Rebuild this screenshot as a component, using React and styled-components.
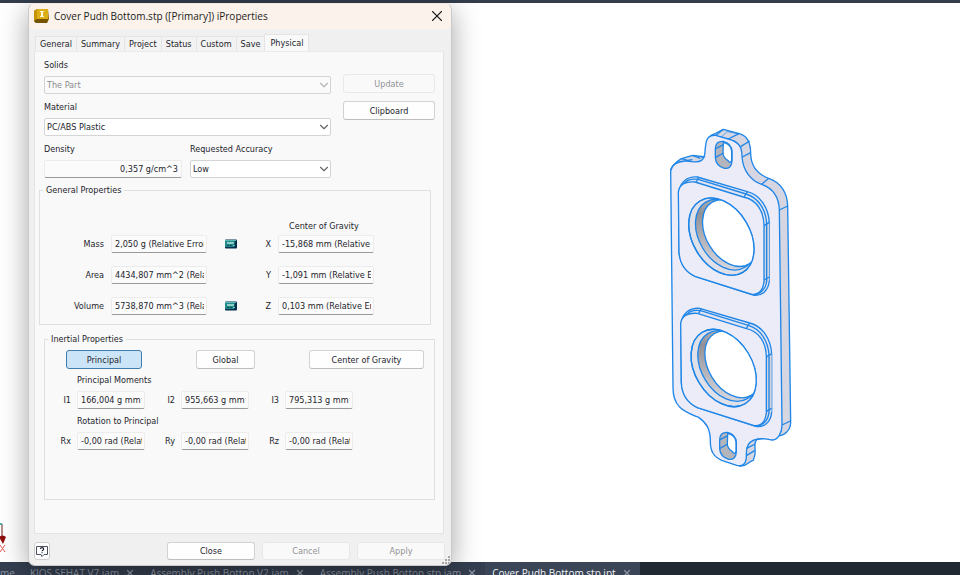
import React from 'react'
import styled, { createGlobalStyle, css } from 'styled-components'
import { ChevronDown, X } from 'lucide-react'

const GlobalStyle = createGlobalStyle`
  * {
    box-sizing: border-box;
  }

  body {
    margin: 0;
    background: #fff;
    overflow: hidden;
  }

  body, button, input, select {
    font-family: 'DejaVu Sans Condensed', 'DejaVu Sans', sans-serif;
    font-size: 9px;
    line-height: 14px;
    color: #24242c;
  }
`

const Desktop = styled.div`
  position: relative;
  display: flex;
  flex-direction: column;
  height: 100vh;
`

const Ribbon = styled.div`
  flex: none;
  height: 3px;
  background: #343d4c;
`

const Viewport = styled.main`
  flex: 1;
  min-height: 0;
  display: flex;
  align-items: center;
  justify-content: flex-end;
  padding-right: 160px;
`

const Triad = styled.svg`
  position: absolute;
  left: 0;
  bottom: 22px;
`

const DocumentTabs = styled.nav`
  flex: none;
  display: flex;
  height: 13px;
  overflow: hidden;
  background: #202832;
  font-family: 'Open Sans', 'Noto Sans', sans-serif;
`

const DocumentTab = styled.div`
  display: flex;
  align-items: center;
  gap: 6px;
  height: 22px;
  padding: 0 8px 0 ${props => (props.$first ? 0 : 7)}px;
  background: ${props => (props.$active ? '#3a4557' : '#343e4f')};

  a {
    font-size: 10px;
    white-space: nowrap;
    text-decoration: none;
    color: ${props => (props.$active ? '#f1f3f6' : '#8d949f')};
  }

  button {
    display: flex;
    padding: 0;
    border: 0;
    background: none;
    color: #8d949f;
  }
`

const Dialog = styled.section`
  position: absolute;
  top: 3px;
  left: 28px;
  width: min(424px, 100vw - 56px);
  border: 1px solid #c9c9c9;
  border-top-color: #f1e8e0;
  border-radius: 7px;
  background: #f0f0f0;
  box-shadow: 0 6px 28px rgba(0, 0, 0, 0.36);
  overflow: hidden;
`

const TitleBar = styled.header`
  display: flex;
  align-items: center;
  gap: 5px;
  height: 25px;
  padding: 0 5px 2px 5px;
  background: #faf2eb;
`

const Title = styled.h1`
  flex: 1;
  margin: 0;
  font: 400 10px/16px 'Open Sans', 'Noto Sans', sans-serif;
  color: #1c1c20;
`

const CloseIcon = styled.button`
  display: flex;
  padding: 0;
  border: 0;
  background: none;
  color: #222;
`

const TabList = styled.div`
  display: flex;
  align-items: flex-end;
  height: 22px;
  padding: 0 6px;
`

const Tab = styled.button`
  height: 15px;
  padding: 1px 4px 0;
  border: 1px solid #e4e4e4;
  border-width: 1px 0 0 1px;
  background: #f3f3f3;
  line-height: 13px;

  ${props =>
    props.$active &&
    css`
      height: 17px;
      padding: 0 5px;
      border-right-width: 1px;
      background: #f9f9f9;
    `}
`

const Panel = styled.div`
  margin: 0 7px 0 5px;
  padding: 6px 8px 33px 9px;
  border: 1px solid #e4e4e4;
  border-top-color: #ebebeb;
  background: #f9f9f9;
`

const MaterialSection = styled.div`
  display: grid;
  grid-template-columns: 287px 1fr;
  gap: 12px;
`

const Stack = styled.div`
  display: flex;
  flex-direction: column;
  gap: 6px;
`

const Actions = styled.div`
  display: flex;
  flex-direction: column;
  gap: 8px;
  padding-top: 16px;
`

const FieldPair = styled.div`
  display: grid;
  grid-template-columns: 1fr 141px;
  gap: 8px;
`

const FieldBlock = styled.div`
  display: flex;
  flex-direction: column;
  gap: 4px;
`

const TextBox = styled.input`
  display: block;
  width: 100%;
  min-width: 0;
  height: 18px;
  padding: 0 ${props => (props.$tight ? 2 : 3)}px 0 3px;
  border: 1px solid #ececec;
  border-bottom-color: #9a9a9a;
  border-radius: 2px;
  background: #fbfbfb;
  outline: 0;
  text-align: ${props => props.$align || 'left'};
`

const SelectBox = styled.div`
  position: relative;

  select {
    display: block;
    width: 100%;
    height: 18px;
    padding: 0 18px 0 2px;
    border: 1px solid #d4d4d4;
    border-radius: 2px;
    background: #fff;
    appearance: none;
    outline: 0;
  }

  select:disabled {
    background: #fafafa;
    color: #8b8b8f;
    opacity: 1;
  }

  svg {
    position: absolute;
    top: 2px;
    right: 0;
    color: ${props => (props.$disabled ? '#b5b5b5' : '#66666a')};
    pointer-events: none;
  }
`

const Button = styled.button`
  height: ${props => (props.$footer ? 18 : 19)}px;
  width: ${props => (props.$width ? `${props.$width}px` : 'auto')};
  padding: 0;
  border: 1px solid #d2d2d2;
  border-bottom-color: #bdbdbd;
  border-radius: 3px;
  background: #fefefe;

  &:disabled {
    border-color: #e8e8e8;
    background: #f9f9f9;
    color: #929297;
  }

  ${props =>
    props.$active &&
    css`
      border-color: #3f7cab;
      background: #cce4f7;
    `}
`

const Group = styled.fieldset`
  min-width: 0;
  margin: ${props => (props.$inset ? '7px 0 0' : '5px 4px 0 -5px')};
  padding: 0;
  border: 1px solid #dfdfdf;

  legend {
    margin-left: 3px;
    padding: 0 3px;
  }
`

const GeneralGrid = styled.div`
  display: grid;
  grid-template-columns: 64px 96px 34px 16px 96px;
  gap: 13px 7px;
  align-items: center;
  padding-bottom: 9px;
`

const GravityHeading = styled.div`
  padding: 22px 0 2px 249px;
`

const FieldLabel = styled.label`
  text-align: right;
  white-space: nowrap;
`

const CalculatorCell = styled.span`
  display: flex;
  justify-content: center;
`

const ModeRow = styled.div`
  display: flex;
  gap: 54px;
  padding: 4px 0 4px 21px;
`

const SubHeading = styled.div`
  padding: 0 0 4px 32px;
`

const InertialGrid = styled.div`
  display: grid;
  grid-template-columns: 26px 68px 24px 68px 24px 68px;
  gap: 6px;
  align-items: center;
  padding-bottom: ${props => (props.$last ? 49 : 5)}px;
`

const Footer = styled.footer`
  display: flex;
  gap: 7px;
  padding: 8px 6px 5px 5px;
`

const HelpButton = styled.button`
  display: flex;
  align-items: center;
  justify-content: center;
  width: 16px;
  height: 18px;
  margin-right: auto;
  padding: 0;
  border: 1px solid #cfcfcf;
  border-radius: 3px;
  background: #fdfdfd;
`

const Grip = styled.svg`
  position: absolute;
  right: 1px;
  bottom: 1px;
`

const generalRows = [
  { name: 'Mass', value: '2,050 g (Relative Error = 0,0%)', axis: 'X', center: '-15,868 mm (Relative Error)', calc: true },
  { name: 'Area', value: '4434,807 mm^2 (Relative Error)', axis: 'Y', center: '-1,091 mm (Relative Error)' },
  { name: 'Volume', value: '5738,870 mm^3 (Relative Error)', axis: 'Z', center: '0,103 mm (Relative Error)', calc: true }
]

const moments = [
  ['I1', '166,004 g mm^2'],
  ['I2', '955,663 g mm^2'],
  ['I3', '795,313 g mm^2']
]

const rotations = [
  ['Rx', '-0,00 rad (Relative)'],
  ['Ry', '-0,00 rad (Relative)'],
  ['Rz', '-0,00 rad (Relative)']
]

const documents = [
  { name: 'KIOS SEHAT V7.iam' },
  { name: 'Assembly Push Botton V2.iam' },
  { name: 'Assembly Push Botton.stp.iam' },
  { name: 'Cover Pudh Bottom.stp.ipt', active: true }
]

const Dropdown = ({ id, label, value, disabled }) => (
  <FieldBlock>
    <label htmlFor={id}>{label}</label>
    <SelectBox $disabled={disabled}>
      <select id={id} disabled={disabled}>
        <option>{value}</option>
      </select>
      <ChevronDown size={14} />
    </SelectBox>
  </FieldBlock>
)

const Inertial = ({ items, last }) => (
  <InertialGrid $last={last}>
    {items.map(([name, value]) => (
      <React.Fragment key={name}>
        <FieldLabel htmlFor={name}>{name}</FieldLabel>
        <TextBox id={name} defaultValue={value} $tight readOnly />
      </React.Fragment>
    ))}
  </InertialGrid>
)

const AppIcon = () => (
  <svg width="15" height="14" viewBox="0 0 15 14">
    <path d="M0 2 3 0h11l1 10-2 4H2L0 12z" fill="#8c6500" />
    <path d="M0 2 3 0v10l-3 2z" fill="#c59405" />
    <path d="M3 0h11v10H3z" fill="#dcae18" />
    <path d="M0 12l3-2h11l-1 4H2z" fill="#765200" />
    <path d="M6 2h4v1H9v4h1v1H6V7h1V3H6z" fill="#fff8dc" />
  </svg>
)

const CalculatorIcon = () => (
  <svg width="12" height="10" viewBox="0 0 12 10">
    <rect width="12" height="9" y="0.5" rx="1" fill="#062f4c" />
    <path d="M0 1h10l-1 7H0z" fill="#23898b" />
    <path d="M0 1h11v1H0z" fill="#58b8b4" />
    <path d="M2 3h7v2H2z" fill="#8fcfc4" />
    <path d="M2 6h2v1H2zM5 6h2v1H5z" fill="#0b4658" />
    <path d="M8 6h2v1H8z" fill="#72c4bd" />
  </svg>
)

const HelpIcon = () => (
  <svg width="12" height="13" viewBox="0 0 12 13" fill="none">
    <path d="M.5 1.5h11v8H8l-2 2-1-2H.5z" fill="#fff" stroke="#4a5060" />
    <path d="M4.4 4c0-1.8 3.3-1.8 3.3.1 0 1.1-1.6 1.1-1.6 2.2" stroke="#222833" strokeWidth="1.2" />
    <path d="M5.5 7.2h1.2v1.1H5.5z" fill="#222833" />
  </svg>
)

// One raised pad with its counterbored hole, drawn twice on the plate
const Pad = ({ id }) => (
  <>
    <path
      d="M56 215C60 182 82 166 112 168L262 212C302 222 326 262 328 305V478C326 510 305 526 280 522L105 466C78 452 58 425 57 390Z"
      fill="#e3e4f0"
    />
    <path d="M312 308L328 303V478L312 492Z" fill="#d2d3df" stroke="none" />
    <path d="M64 198C78 176 92 172 115 175L258 219C296 230 318 268 320 308V480C318 505 300 520 280 522" />
    <path d="M55 215C57 190 75 181 105 183L250 228C290 236 311 270 312 312V482C309 508 297 521 276 520L105 466C75 452 58 425 57 390Z" fill="#ececf8" />
    <path d="M117 168l-8 15M262 212l-10 16M328 304l-16 10M328 468l-16 9" />
    <clipPath id={`${id}-ring`}>
      <ellipse cx="184" cy="347" rx="125" ry="86" transform="rotate(59 184 347)" />
    </clipPath>
    <ellipse cx="184" cy="347" rx="125" ry="86" transform="rotate(59 184 347)" fill="#e0e0e9" />
    <g clipPath={`url(#${id}-ring)`}>
      <ellipse cx="196" cy="341" rx="114" ry="79" transform="rotate(59 196 341)" fill="url(#bore)" />
      <ellipse cx="212" cy="336" rx="108" ry="74" transform="rotate(59 212 336)" fill="#fff" />
    </g>
    <ellipse cx="184" cy="347" rx="125" ry="86" transform="rotate(59 184 347)" />
  </>
)

const Slot = () => (
  <>
    <path d="M166 84C166 68 174 60 190 61C206 65 215 76 216 91V120C215 137 207 144 193 142C176 137 167 126 166 110Z" fill="#b4b4bb" />
    <path d="M190 64C205 68 215 77 215 91V119Q210 129 204 119C194 112 189 105 189 96Z" fill="#fff" />
    <path d="M167 83l24-12M167 109l23-13" />
  </>
)

const Model = () => (
  <svg width="140" height="380" viewBox="0 -84 420 1140" fill="none" stroke="#1f86e8" strokeWidth="4" strokeLinejoin="round">
    <linearGradient id="bore" x1="0" y1="0" x2="1" y2="0.5">
      <stop offset="0" stopColor="#c9c9ce" />
      <stop offset="0.35" stopColor="#909096" />
      <stop offset="1" stopColor="#d2d2d8" />
    </linearGradient>
    <path
      d="M32 150C34 136 42 127 64 113L98 103L136 108L140 70C142 52 150 43 163 39L190 25L238 38C262 44 272 65 272 98C273 139 295 160 326 172C362 184 382 215 383 255L392 905C391 928 375 943 352 945L290 956C280 964 287 976 285 1000L280 1018C266 1020 261 1037 240 1035L200 1020Z"
      fill="#d5d6e1"
    />
    <path
      d="M32 150C35 133 48 122 75 120C98 119 107 129 125 118C139 106 133 91 137 73C139 51 149 41 167 43L205 54C236 62 246 77 246 105C248 149 273 180 305 190C339 202 357 229 358 267L366 912C366 934 355 956 338 957C317 954 304 948 282 957C264 963 258 977 259 1002C260 1028 248 1038 230 1033L185 1018C160 1007 151 990 151 960C151 924 139 905 116 889C91 879 75 874 58 857C44 842 39 825 39 800Z"
      fill="#ececf8"
    />
    <path d="M64 113l19 5 14-2M98 103l23 9M168 43l22-18M205 54l33-17M242 77l27-17M247 108l25-13M305 190l21-18M358 267l25-12M366 912l25-12M260 982l25-13M260 1003l24-14" />
    <path d="M183 49l18-17 36 7M136 108l-14 3" strokeWidth="2" />
    <Slot />
    <g transform="translate(13 873)">
      <Slot />
    </g>
    <Pad id="upper" />
    <g transform="translate(7 394)">
      <Pad id="lower" />
    </g>
  </svg>
)

export default () => (
  <>
    <GlobalStyle />
    <Desktop>
      <Ribbon />
      <Viewport>
        <Triad width="8" height="34" viewBox="0 0 8 34">
          <path d="M0 5h2v15" fill="none" stroke="#6b1d1d" />
          <path d="M0 4h2v2H0z" fill="#4fa99c" />
          <path d="M-1 18q4-3 7 0l-3 7z" fill="#8e0d0d" />
          <path d="M0 26l5 7M5 26l-5 7" stroke="#e2574f" />
        </Triad>
        <Model />
      </Viewport>
      <DocumentTabs>
        <DocumentTab $first>
          <a href="#home">me</a>
        </DocumentTab>
        {documents.map(({ name, active }) => (
          <DocumentTab key={name} $active={active}>
            <a href="#document">{name}</a>
            <button aria-label="Close document">
              <X size={10} strokeWidth={3} />
            </button>
          </DocumentTab>
        ))}
      </DocumentTabs>

      <Dialog>
        <TitleBar>
          <AppIcon />
          <Title>Cover Pudh Bottom.stp ([Primary]) iProperties</Title>
          <CloseIcon aria-label="Close window">
            <X size={18} strokeWidth={1.5} />
          </CloseIcon>
        </TitleBar>
        <TabList role="tablist">
          {['General', 'Summary', 'Project', 'Status', 'Custom', 'Save', 'Physical'].map(name => (
            <Tab key={name} role="tab" $active={name === 'Physical'}>
              {name}
            </Tab>
          ))}
        </TabList>
        <Panel>
          <MaterialSection>
            <Stack>
              <Dropdown id="solids" label="Solids" value="The Part" disabled />
              <Dropdown id="material" label="Material" value="PC/ABS Plastic" />
              <FieldPair>
                <FieldBlock>
                  <label htmlFor="density">Density</label>
                  <TextBox id="density" defaultValue="0,357 g/cm^3" $align="right" readOnly />
                </FieldBlock>
                <Dropdown id="accuracy" label="Requested Accuracy" value="Low" />
              </FieldPair>
            </Stack>
            <Actions>
              <Button disabled>Update</Button>
              <Button>Clipboard</Button>
            </Actions>
          </MaterialSection>

          <Group>
            <legend>General Properties</legend>
            <GravityHeading>Center of Gravity</GravityHeading>
            <GeneralGrid>
              {generalRows.map(({ name, value, axis, center, calc }) => (
                <React.Fragment key={name}>
                  <FieldLabel htmlFor={name}>{name}</FieldLabel>
                  <TextBox id={name} defaultValue={value} $tight readOnly />
                  <CalculatorCell>{calc && <CalculatorIcon />}</CalculatorCell>
                  <FieldLabel htmlFor={axis}>{axis}</FieldLabel>
                  <TextBox id={axis} defaultValue={center} $tight readOnly />
                </React.Fragment>
              ))}
            </GeneralGrid>
          </Group>

          <Group $inset>
            <legend>Inertial Properties</legend>
            <ModeRow>
              <Button $width={76} $active>Principal</Button>
              <Button $width={59}>Global</Button>
              <Button $width={115}>Center of Gravity</Button>
            </ModeRow>
            <SubHeading>Principal Moments</SubHeading>
            <Inertial items={moments} />
            <SubHeading>Rotation to Principal</SubHeading>
            <Inertial items={rotations} last />
          </Group>
        </Panel>
        <Footer>
          <HelpButton aria-label="Help">
            <HelpIcon />
          </HelpButton>
          <Button $footer $width={88}>Close</Button>
          <Button $footer $width={88} disabled>Cancel</Button>
          <Button $footer $width={88} disabled>Apply</Button>
        </Footer>
        <Grip width="8" height="8" viewBox="0 0 8 8" fill="#a5a5a5">
          <path d="M6 0h2v2H6zM6 3h2v2H6zM6 6h2v2H6zM3 3h2v2H3zM3 6h2v2H3zM0 6h2v2H0z" />
        </Grip>
      </Dialog>
    </Desktop>
  </>
)
